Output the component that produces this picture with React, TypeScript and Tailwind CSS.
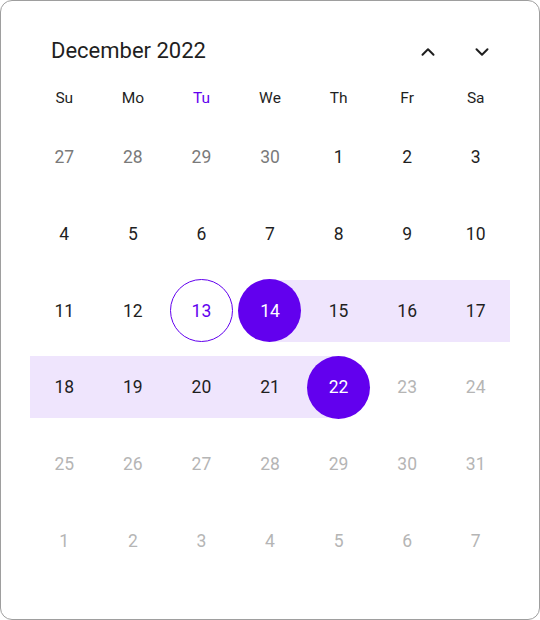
import { ChevronDown, ChevronUp } from 'lucide-react';

type Day = {
  label: number;
  kind: 'prev' | 'cur' | 'next';
};

const weekdays = ['Su', 'Mo', 'Tu', 'We', 'Th', 'Fr', 'Sa'];

function buildDays(): Day[] {
  const days: Day[] = [];
  for (let d = 27; d <= 30; d++) days.push({ label: d, kind: 'prev' });
  for (let d = 1; d <= 31; d++) days.push({ label: d, kind: 'cur' });
  for (let d = 1; days.length < 42; d++) days.push({ label: d, kind: 'next' });
  return days;
}

const RANGE_START = 14;
const RANGE_END = 22;
const TODAY = 13;

function DayCell({ day, col }: { day: Day; col: number }) {
  const cur = day.kind === 'cur';
  const inRange = cur && day.label >= RANGE_START && day.label <= RANGE_END;
  const isStart = cur && day.label === RANGE_START;
  const isEnd = cur && day.label === RANGE_END;
  const isToday = cur && day.label === TODAY;

  let band = '';
  if (inRange) {
    if (isStart && col === 6) band = '';
    else if (isStart) band = 'left-1/2 right-0';
    else if (isEnd && col === 0) band = '';
    else if (isEnd) band = 'left-0 right-1/2';
    else band = 'left-0 right-0';
  }

  let text = 'text-[#1f1f1f]';
  if (day.kind === 'prev') text = 'text-[#7a7a7a]';
  if (day.kind === 'next' || (cur && day.label > RANGE_END)) text = 'text-[#b5b5b5]';

  return (
    <div className="relative flex items-center justify-center">
      {band && <div className={`absolute top-1/2 h-[62px] -translate-y-1/2 bg-[#efe5fd] ${band}`} />}
      {isStart || isEnd ? (
        <div className="relative flex h-[63px] w-[63px] items-center justify-center rounded-full bg-[#6200ee] text-white">
          {day.label}
        </div>
      ) : isToday ? (
        <div className="relative flex h-[63px] w-[63px] items-center justify-center rounded-full border-[1.5px] border-[#6200ee] text-[#6200ee]">
          {day.label}
        </div>
      ) : (
        <span className={`relative ${text}`}>{day.label}</span>
      )}
    </div>
  );
}

export default function App() {
  const days = buildDays();

  return (
    <div className="h-[620px] w-[540px] bg-white font-['Roboto',sans-serif]">
      <div className="flex h-full w-full flex-col rounded-[12px] border border-[#9e9e9e] px-[29px]">
        <div className="flex h-[78px] items-center justify-between pt-[21px]">
          <h1 className="pl-[21px] text-[22px] font-normal text-[#1f1f1f]">December 2022</h1>
          <div className="mt-[3px] flex items-center gap-[32px] pr-[17px] text-[#1f1f1f]">
            <ChevronUp className="h-[22px] w-[22px]" strokeWidth={2.2} />
            <ChevronDown className="h-[22px] w-[22px]" strokeWidth={2.2} />
          </div>
        </div>

        <div className="grid h-[40px] grid-cols-7 items-center text-[15.5px]">
          {weekdays.map((w) => (
            <div
              key={w}
              className={`text-center ${w === 'Tu' ? 'text-[#6200ee]' : 'text-[#1f1f1f]'}`}
            >
              {w}
            </div>
          ))}
        </div>

        <div className="grid h-[460px] grid-cols-7 grid-rows-6 text-[17.5px]">
          {days.map((day, i) => (
            <DayCell key={i} day={day} col={i % 7} />
          ))}
        </div>
      </div>
    </div>
  );
}
